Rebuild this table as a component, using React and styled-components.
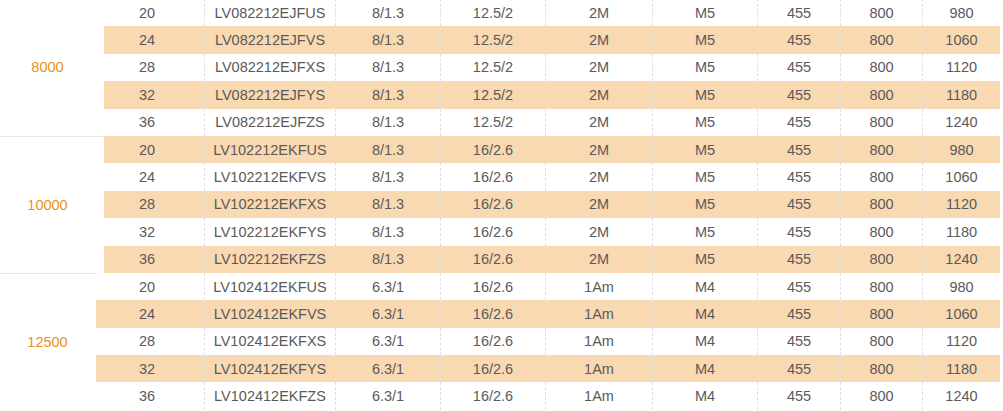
import React from "react";
import styled, { createGlobalStyle } from "styled-components";

const GlobalStyle = createGlobalStyle`
  body {
    margin: 0;
    background: #ffffff;
    font-family: "Liberation Sans", Arial, sans-serif;
  }
`;

const Table = styled.div`
  width: 1000px;
  margin-top: -1px;
  display: flex;
  flex-direction: column;
`;

const Group = styled.div`
  display: flex;
`;

const Lead = styled.div`
  flex: 0 0 ${({ width }) => width}px;
  display: flex;
  align-items: center;
  justify-content: center;
  color: #e8921e;
  font-size: 14.5px;
  padding-right: ${({ width }) => width - 95}px;
  box-sizing: border-box;
  border-top: ${({ first }) => (first ? "none" : "1px solid #e8e8e8")};
`;

const Rows = styled.div`
  flex: 1;
  display: flex;
  flex-direction: column;
`;

const Row = styled.div`
  display: grid;
  grid-template-columns: 1fr 131px 105px 105px 107px 105px 83px 82px 78px;
  height: 27.4px;
  background: ${({ striped }) => (striped ? "#f9d9b1" : "#ffffff")};
`;

const Cell = styled.div`
  display: flex;
  align-items: center;
  justify-content: center;
  font-size: 14.5px;
  color: #5a5a5a;
  padding-right: ${({ shift }) => shift || 0}px;
  border-left: ${({ lined }) => (lined ? "1px dashed #e0e0e0" : "none")};
  white-space: nowrap;
`;

const groups = [
  {
    power: "8000",
    lead: 104,
    code: "LV082212EJF",
    ratio: "8/1.3",
    pipe: "12.5/2",
    cable: "2M",
    bolt: "M5",
  },
  {
    power: "10000",
    lead: 104,
    code: "LV102212EKF",
    ratio: "8/1.3",
    pipe: "16/2.6",
    cable: "2M",
    bolt: "M5",
  },
  {
    power: "12500",
    lead: 96,
    code: "LV102412EKF",
    ratio: "6.3/1",
    pipe: "16/2.6",
    cable: "1Am",
    bolt: "M4",
  },
];

const sizes = [
  { size: "20", suffix: "US", len: "980" },
  { size: "24", suffix: "VS", len: "1060" },
  { size: "28", suffix: "XS", len: "1120" },
  { size: "32", suffix: "YS", len: "1180" },
  { size: "36", suffix: "ZS", len: "1240" },
];

const App = () => {
  return (
    <React.Fragment>
      <GlobalStyle />
      <Table>
        {groups.map((g, gi) => (
          <Group key={g.power}>
            <Lead width={g.lead} first={gi === 0}>
              {g.power}
            </Lead>
            <Rows>
              {sizes.map((s, si) => {
                const index = gi * sizes.length + si;
                return (
                  <Row key={s.size} striped={index % 2 === 1}>
                    <Cell shift={g.lead - 90}>{s.size}</Cell>
                    <Cell lined>{g.code + s.suffix}</Cell>
                    <Cell lined>{g.ratio}</Cell>
                    <Cell lined>{g.pipe}</Cell>
                    <Cell lined>{g.cable}</Cell>
                    <Cell lined>{g.bolt}</Cell>
                    <Cell lined>455</Cell>
                    <Cell lined>800</Cell>
                    <Cell lined>{s.len}</Cell>
                  </Row>
                );
              })}
            </Rows>
          </Group>
        ))}
      </Table>
    </React.Fragment>
  );
};

export default App;
